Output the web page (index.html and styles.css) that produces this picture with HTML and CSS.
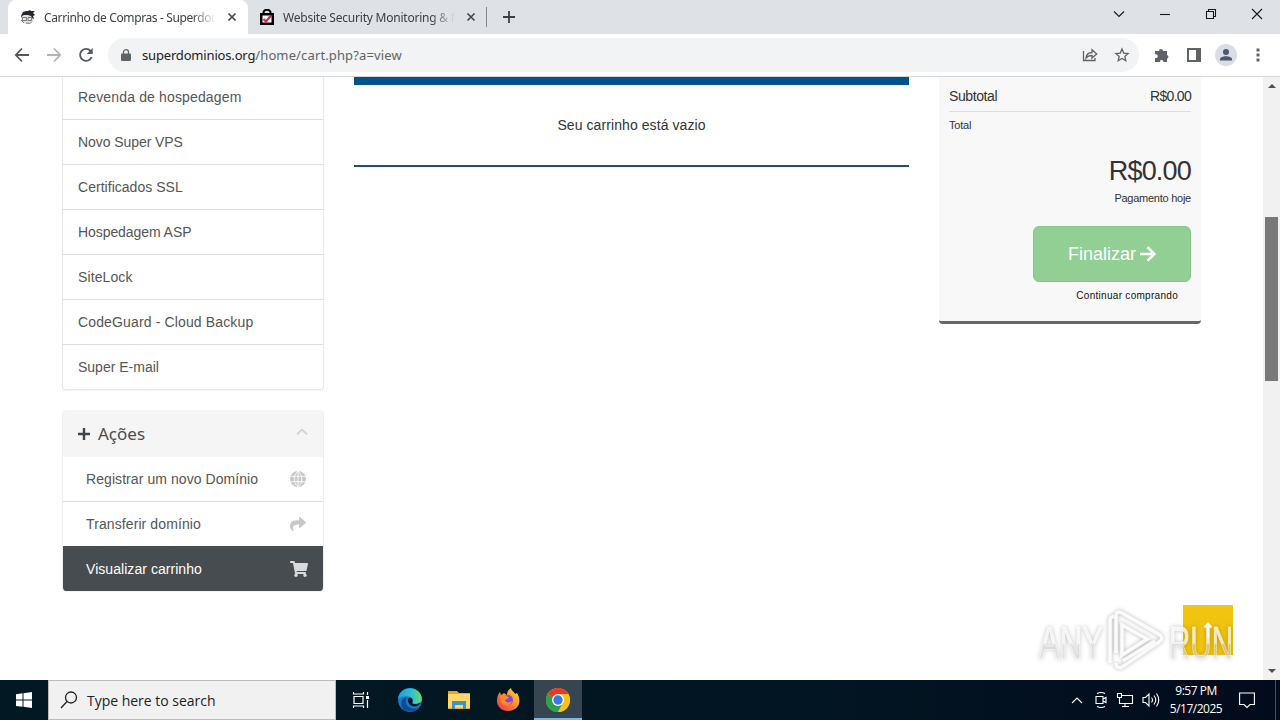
FILE: index.html
```html
<!DOCTYPE html>
<html lang="pt">
<head>
<meta charset="utf-8">
<title>Carrinho de Compras</title>
<link rel="stylesheet" href="styles.css">
</head>
<body>
<header class="tabs">
  <div class="tab active">
    <svg class="favicon" width="16" height="16" viewBox="0 0 16 16"><path d="M1 7l3-3 9 1 1 5-3 4-5 1-4-2z" fill="#e9dcd8"/><path d="M1 7l2-4 3-1h2l2-1 1 1h4l-2 2 2 2-2 1 1 3-2-1-1-2-3-1-4 0-2 1-1 2z" fill="#24262b"/><path d="M2.500 8.500h4v3h-4zM8 8.500h3.500v3H8z" fill="#dbe8ee" stroke="#66727d" stroke-width=".9"/><path d="M1 11l3 3M6 14l4 .5 2-2" stroke="#8b7772" fill="none"/></svg>
    <span class="tab-title t1">Carrinho de Compras - Superdom</span>
    <svg class="close" width="10" height="10" viewBox="0 0 10 10"><path d="M1.500 1.500l7 7M8.500 1.500l-7 7"/></svg>
  </div>
  <div class="tab second">
    <svg class="favicon" width="16" height="16" viewBox="0 0 16 16"><path d="M4.500 6V3.500a3.500 2.700 0 0 1 7 0V6" fill="none" stroke="#000" stroke-width="2"/><path d="M1 4h14v12H1z" fill="#000"/><path d="M3.500 6.500h9v7h-9z" fill="#fff"/><path d="M4.500 10l2.500 2.500 5-6" fill="none" stroke="#dc2445" stroke-width="2.200"/></svg>
    <span class="tab-title t2">Website Security Monitoring &amp; M</span>
    <svg class="close" width="10" height="10" viewBox="0 0 10 10"><path d="M1.500 1.500l7 7M8.500 1.500l-7 7"/></svg>
  </div>
  <span class="divider"></span>
  <svg class="newtab" width="12" height="12" viewBox="0 0 12 12"><path d="M6 0v12M0 6h12"/></svg>
  <div class="winbtns">
    <svg width="12" height="12" viewBox="0 0 12 12"><path d="M1 3.500l5 5 5-5"/></svg>
    <svg width="12" height="12" viewBox="0 0 12 12"><path d="M1 6.500h10"/></svg>
    <svg width="12" height="12" viewBox="0 0 12 12"><path d="M1.500 3.500h7v7h-7zM3.500 3.500v-2h7v7h-2"/></svg>
    <svg width="12" height="12" viewBox="0 0 12 12"><path d="M1 1l10 10M11 1L1 11"/></svg>
  </div>
</header>
<div class="toolbar">
  <svg class="nav" width="16" height="16" viewBox="0 0 16 16"><path d="M15 8H2M8 1.500L1.800 8 8 14.500"/></svg>
  <svg class="nav fwd" width="16" height="16" viewBox="0 0 16 16"><path d="M1 8h13M8 1.500L14.200 8 8 14.500"/></svg>
  <svg class="nav" width="16" height="16" viewBox="0 0 16 16"><path d="M13.700 10a6 6 0 1 1-1.200-6.200L14 5.500"/><path d="M14.700 1v6h-6z" class="solid"/></svg>
  <div class="omnibox">
    <svg width="10" height="12" viewBox="0 0 10 12"><path d="M1 4.500h8q1 0 1 1V11q0 1-1 1H1q-1 0-1-1V5.500q0-1 1-1z" fill="#5f6368"/><path d="M2.500 5V3a2.500 2.300 0 0 1 5 0v2" fill="none" stroke="#5f6368" stroke-width="1.300"/></svg>
    <span class="url"><b>superdominios.org</b>/home/cart.php?a=view</span>
    <svg class="line share" width="16" height="16" viewBox="0 0 16 16"><path d="M1.500 4v9.500H13V11M4 11c.5-4 2.500-5.500 6-5.500V2.800L14.700 7 10 11V8.500c-2.800 0-4.600.8-6 2.500z"/></svg>
    <svg class="line star" width="16" height="16" viewBox="0 0 16 16"><path d="M8 2l1.700 4.100 4.400.4-3.300 2.900 1 4.300L8 11.400l-3.800 2.300 1-4.300L1.900 6.500l4.400-.4z"/></svg>
  </div>
  <svg class="ext" width="16" height="16" viewBox="0 0 16 16"><path d="M1 4h4a2 2 0 1 1 4-.2V4h4v4a1.900 1.900 0 0 1 0 3.700V15H9.500a1.900 1.900 0 0 0-3.800 0H1v-4a2 2 0 1 0 0-3.700z" fill="#5f6368"/></svg>
  <svg class="panel" width="14" height="14" viewBox="0 0 14 14"><path d="M1 1h12v12H1z" fill="none" stroke="#5f6368" stroke-width="2"/><path d="M9 1h4v12H9z" fill="#5f6368"/></svg>
  <svg class="avatar" width="22" height="22" viewBox="0 0 22 22"><circle cx="11" cy="11" r="11" fill="#dadce6"/><circle cx="11" cy="8" r="3" fill="#4d5770"/><path d="M5 16.500v-1.300c0-4 12-4 12 0v1.300z" fill="#4d5770"/></svg>
  <svg class="dots" width="4" height="14" viewBox="0 0 4 14"><path d="M.5.5h3v3h-3zM.5 5.500h3v3h-3zM.5 10.500h3v3h-3z" fill="#5f6368"/></svg>
</div>
<div class="viewport">
  <main class="page">
    <aside class="side">
      <nav class="list">
        <a class="l1">Revenda de hospedagem</a><a class="l2">Novo Super VPS</a><a class="l3">Certificados SSL</a><a class="l4">Hospedagem ASP</a><a class="l5">SiteLock</a><a class="l6">CodeGuard - Cloud Backup</a><a class="l7">Super E-mail</a>
      </nav>
      <nav class="list actions">
        <h3><svg width="12" height="12" viewBox="0 0 12 12"><path d="M6 0v12M0 6h12" stroke="#3e4347" stroke-width="2.400"/></svg><span>Ações</span><svg class="chev" width="12" height="8" viewBox="0 0 12 8"><path d="M1 6.500l5-5 5 5" fill="none" stroke="#d4d4d4" stroke-width="1.800"/></svg></h3>
        <a class="a1"><span>Registrar um novo Domínio</span><svg width="16" height="16" viewBox="0 0 16 16"><circle cx="8" cy="8" r="8" fill="#c7c7c7"/><path d="M0 5.300h16M0 10.700h16M8 0v16M8 0c-5 4-5 12 0 16M8 0c5 4 5 12 0 16" fill="none" stroke="#fff" stroke-width=".9"/></svg></a>
        <a class="a2"><span>Transferir domínio</span><svg width="16" height="16" viewBox="0 0 512 512"><path fill="#c7c7c7" d="M503.700 189.800L327.700 37.900C312.300 24.500 288 35.300 288 56v80C127.400 137.900 0 170.100 0 322.300c0 61.400 39.600 122.300 83.300 154.100 13.700 9.900 33.100-2.500 28.100-18.600C66.100 312.800 132.900 274.300 288 272v88c0 20.700 24.300 31.500 39.700 18.200l176-152c11.100-9.600 11.100-26.800 0-36.400z"/></svg></a>
        <a class="a3"><span>Visualizar carrinho</span><svg width="18" height="16" viewBox="0 0 576 512"><path fill="#d8dadb" d="M528.100 301.300l47.300-208C578.800 78.300 567.400 64 552 64H159.200l-9.200-44.800C147.800 8 137.900 0 126.500 0H24C10.700 0 0 10.700 0 24v16c0 13.300 10.700 24 24 24h69.900l70.200 343.400C147.300 417.100 136 435.200 136 456c0 30.900 25.100 56 56 56s56-25.100 56-56c0-15.700-6.400-29.800-16.800-40h209.600C430.400 426.200 424 440.300 424 456c0 30.900 25.100 56 56 56s56-25.100 56-56c0-22.200-12.900-41.300-31.600-50.400l5.500-24.300c3.400-15-8-29.300-23.400-29.300H218.100l-6.500-32h293.100c11.200 0 20.900-7.800 23.400-18.700z"/></svg></a>
      </nav>
    </aside>
    <section class="cart"><div class="empty"><span>Seu carrinho está vazio</span></div></section>
    <aside class="summary">
      <div class="sub"><span class="s1">Subtotal</span><span class="s2">R$0.00</span></div>
      <div class="total">Total</div>
      <div class="amount">R$0.00</div>
      <div class="today">Pagamento hoje</div>
      <a class="checkout"><span>Finalizar</span><svg width="16" height="16" viewBox="0 0 16 16"><path d="M0 8h14M7.500 1.200L14.300 8l-6.800 6.800" fill="none" stroke="#fff" stroke-width="2.600"/></svg></a>
      <div class="more">Continuar comprando</div>
    </aside>
    <div class="totop"><svg width="10" height="16" viewBox="0 0 10 16"><path d="M5 16V2M1.500 5.500L5 2l3.500 3.500" fill="none" stroke="#fff" stroke-width="2.400"/></svg></div>
    <svg class="mark" width="210" height="70" viewBox="0 0 210 70">
      <defs><linearGradient id="wm" x1="0" y1="0" x2="0" y2="1"><stop offset=".5" stop-color="#fff" stop-opacity=".75"/><stop offset=".54" stop-color="#ddd" stop-opacity=".5"/></linearGradient></defs>
      <g class="glow">
        <text x="8" y="54" textLength="64" lengthAdjust="spacingAndGlyphs">ANY</text>
        <text x="138" y="54" textLength="64" lengthAdjust="spacingAndGlyphs">RUN</text>
        <path d="M79 58V16q0-4 4-5M85 48V11q0-6 6-3l38 22q4 4-1 7L91 62q-6 2-6-4M91 20v30l25-16zM92 56l32-20" fill="none" stroke="#fff" stroke-opacity=".9" stroke-width="3.500"/>
      </g>
    </svg>
  </main>
  <div class="scroll"><i class="up"></i><span class="thumb"></span><i class="down"></i></div>
</div>
<footer class="taskbar">
  <svg class="start" width="16" height="16" viewBox="0 0 16 16"><path d="M0 2.200L6.500 1.300V7.600H0zM7.500 1.200L16 0v7.600H7.500zM0 8.500h6.500v6.300L0 13.900zM7.500 8.500H16V16l-8.500-1.200z" fill="#fff"/></svg>
  <div class="search"><svg width="18" height="18" viewBox="0 0 18 18"><circle cx="11" cy="6.500" r="5.500"/><path d="M7 10.500L1 17"/></svg><span>Type here to search</span></div>
  <div class="apps">
    <div class="app"><svg width="18" height="18" viewBox="0 0 18 18" fill="none" stroke="#fff" stroke-width="1.200"><path d="M2 5.500h9v7H2zM1.500 1v2h10V1M1.500 17v-2h10v2M15.500 1v3M15.500 9v8"/><path d="M14 5h3v3h-3z" fill="#fff" stroke="none"/></svg></div>
    <div class="app"><svg width="26" height="26" viewBox="0 0 24 24"><defs><linearGradient id="e1" x1="0" x2="1"><stop stop-color="#1b9de2"/><stop offset=".6" stop-color="#35c1c9"/><stop offset="1" stop-color="#68dc65"/></linearGradient></defs><circle cx="12" cy="12" r="11" fill="#1679c9"/><path d="M1 11C2-2 22-2 23 11c0 5-7 6-9 3 2-2 0-5-3-5-4-1-8 0-10 2z" fill="url(#e1)"/><path d="M9 10c-3 5 1 10 7 10 3 0 5-1 6-3-6 9-19 6-18-2 0-3 2-5 5-5z" fill="#104b91"/><path d="M10 11q2-2 4 0 1 2 0 4 3 2 8-1-2 4-6 4-6-1-6-7z" fill="#021923"/></svg></div>
    <div class="app"><svg width="22" height="20" viewBox="0 0 22 20"><path d="M0 1h9l2 2h11v16H0z" fill="#e9a820"/><path d="M0 4h22v14H0z" fill="#ffd868"/><path d="M4 11h14v8h-3v-4H7v4H4z" fill="#3c91d0"/></svg></div>
    <div class="app"><svg width="24" height="24" viewBox="0 0 24 24"><defs><linearGradient id="f1" x1="1" y1="0" x2="0" y2="1"><stop stop-color="#ffe34b"/><stop offset=".4" stop-color="#ff9a24"/><stop offset="1" stop-color="#f5255e"/></linearGradient></defs><path d="M1 13c0-4 1-7 3-9l1 3 3-2 3 2c0-3 1-5 4-7 1 4 3 3 4 6l2-1c6 10 0 18-9 18C6 23 1 19 1 13z" fill="url(#f1)"/><circle cx="12" cy="12" r="5" fill="#8146dc"/><path d="M4 8c4-2 6 0 9 1-1 2-3 2-4 3 1 3 4 3 7 1-1 5-8 6-11 1z" fill="#ff872c"/></svg></div>
    <div class="app current"><svg width="24" height="24" viewBox="0 0 24 24"><circle cx="12" cy="12" r="12" fill="#fbc116"/><path d="M12 12L1.600 6A12 12 0 0 1 22.400 6z" fill="#e33b2e"/><path d="M1.600 6A12 12 0 0 0 12 24l5-9-5-3z" fill="#2ba24c"/><path d="M12 6h10.400A12 12 0 0 1 12 24l5.200-9z" fill="#fbc116"/><circle cx="12" cy="12" r="6" fill="#fff"/><circle cx="12" cy="12" r="4.700" fill="#3878e7"/></svg></div>
  </div>
  <div class="tray">
    <svg width="12" height="8" viewBox="0 0 12 8"><path d="M1 7l5-5 5 5"/></svg>
    <svg width="14" height="18" viewBox="0 0 14 18"><path d="M2 5.500h7v7H2zM9 8l3-1.500v5L9 10M3 2.500q4-2 8 0M3 15.500q4 2 8 0"/></svg>
    <svg width="18" height="16" viewBox="0 0 18 16"><path d="M6 3.500h10.500v8H5M9 12v2.500M6 14.500h7M1.500 1.500h4v4h-4zM3.500 5.500v6h3"/></svg>
    <svg width="18" height="16" viewBox="0 0 18 16"><path d="M1 5.500h2.500L7 2v12l-3.500-3.500H1zM9.500 5.500q2 2.500 0 5M12 3.500q3.500 4.500 0 9M14.500 1.500q4.500 6.500 0 13"/></svg>
    <div class="clock"><span>9:57 PM</span><span>5/17/2025</span></div>
    <svg width="16" height="17" viewBox="0 0 16 17"><path d="M.6 1h14.800v11.500H11L8 15.500 5 12.500H.6z"/></svg>
    <i class="desk"></i>
  </div>
</footer>
</body>
</html>
```
FILE: styles.css
```css
* { box-sizing: border-box; }
body { margin: 0; width: 1280px; height: 720px; overflow: hidden; display: flex; flex-direction: column; background: #fff; font-family: "Liberation Sans", Arial, sans-serif; color: #333; }
svg { flex: none; display: block; }
span { white-space: nowrap; }

.tabs { height: 34px; background: #dee1e6; display: flex; align-items: center; font: 12px "Noto Sans", sans-serif; color: #3c4043; }
.tab { height: 34px; display: flex; align-items: center; width: 240px; padding-left: 12px; }
.tab.active { background: #fff; border-radius: 8px 8px 0 0; margin-left: 8px; }
.tab.second { width: 238px; padding-left: 11px; }
.tab-title { width: 172px; margin-left: 8px; overflow: hidden; -webkit-mask-image: linear-gradient(90deg, #000 86%, transparent); mask-image: linear-gradient(90deg, #000 86%, transparent); }
.t1 { letter-spacing: -.38px; }
.t2 { letter-spacing: -.22px; }
.close { margin-left: 11px; fill: none; stroke: #45494d; stroke-width: 1.7; }
.divider { width: 1px; height: 20px; background: #85888d; }
.newtab { margin-left: 16px; stroke: #3c4043; stroke-width: 1.8; }
.winbtns { margin-left: auto; margin-right: 17px; display: flex; gap: 34px; margin-top: -6px; fill: none; stroke: #17181a; stroke-width: 1.1; }

.toolbar { height: 43px; border-bottom: 1px solid #d5d7d9; display: flex; align-items: center; padding-left: 14px; }
.nav { margin-right: 16px; fill: none; stroke: #54585c; stroke-width: 1.8; }
.nav .solid { fill: #54585c; stroke: none; }
.fwd { opacity: .45; }
.omnibox { width: 1031px; height: 34px; margin-left: -2px; border-radius: 17px; background: #f1f3f4; display: flex; align-items: center; padding: 0 9px 0 13px; }
.url { margin-left: 11px; font: 13px "Noto Sans", sans-serif; color: #5f6368; letter-spacing: .13px; }
.url b { font-weight: 400; color: #202124; letter-spacing: -.17px; }
.line { fill: none; stroke: #5f6368; stroke-width: 1.3; }
.share { margin-left: auto; margin-right: 16px; }
.ext { margin-left: 15px; }
.panel { margin-left: 17px; }
.avatar { margin-left: 14px; }
.dots { margin-left: 19px; }

.viewport { height: 603px; display: flex; overflow: hidden; }
.page { position: relative; width: 1263px; padding: 0 62px; display: flex; align-items: flex-start; gap: 30px; }
.side { width: 262px; margin-top: -2px; font-size: 14px; color: #555; }
.list { border: 1px solid #e8e8e8; border-top: 0; border-radius: 4px; overflow: hidden; box-shadow: 0 1px 1px #0000000d; margin-bottom: 20px; }
.list a { height: 45px; display: flex; align-items: center; justify-content: space-between; padding: 0 15px; border-bottom: 1px solid #ddd; }
.list a:last-child { border-bottom: 0; height: 44px; }
.l1 { letter-spacing: .15px; }
.l2 { letter-spacing: -.07px; }
.l3 { letter-spacing: .03px; }
.l4 { letter-spacing: -.07px; }
.l5 { letter-spacing: .1px; }
.l6 { letter-spacing: .14px; }
.a1 { letter-spacing: .07px; }
.a2 { letter-spacing: .1px; }
.a3 { letter-spacing: .05px; }
.actions { border-color: #eee; }
.actions h3 { margin: 0; height: 47px; display: flex; align-items: center; gap: 8px; padding: 0 15px; background: #f5f5f5; font: 17px "Noto Sans", sans-serif; color: #494d50; }
.chev { margin: -4px 0 0 auto; }
.actions a { padding: 0 17px 0 23px; }
.actions a.a2 { height: 44px; border-bottom: 0; }
.actions a.a3 { height: 45px; background: #474c50; color: #fff; padding-right: 15px; }
.actions { border-bottom: 0; }
.cart { width: 555px; border-top: 8px solid #00528a; border-bottom: 2px solid #1c4f78; height: 90px; }
.empty { height: 80px; display: flex; align-items: center; justify-content: center; font-size: 14px; letter-spacing: .08px; }
.summary { width: 262px; height: 247px; background: #f8f8f8; border-bottom: 3px solid #666; border-radius: 0 0 4px 4px; padding: 5px 10px 0; display: flex; flex-direction: column; align-items: stretch; }
.sub { height: 30px; border-bottom: 1px solid #ddd; display: flex; justify-content: space-between; align-items: center; padding-bottom: 1px; font-size: 14px; }
.s1 { letter-spacing: -.4px; }
.s2 { letter-spacing: -.7px; }
.total { font-size: 11px; line-height: 14px; margin-top: 6px; letter-spacing: -.2px; }
.amount { font-size: 27px; line-height: 32px; text-align: right; margin-top: 23px; letter-spacing: -.8px; }
.today { font-size: 11px; line-height: 14px; text-align: right; margin-top: 4px; letter-spacing: -.25px; }
.checkout { align-self: flex-end; width: 158px; height: 56px; margin-top: 21px; border: 1px solid #87c68a; border-radius: 6px; background: #92cf94; color: #fff; font-size: 18px; display: flex; align-items: center; justify-content: center; gap: 4px; }
.more { font-size: 10px; line-height: 14px; text-align: right; margin-top: 7px; padding-right: 13px; letter-spacing: .29px; color: #111; }
.totop { position: absolute; left: 1183px; top: 528px; width: 50px; height: 50px; background: #f1c40f; display: flex; align-items: center; justify-content: center; }
.mark { position: absolute; left: 1031px; top: 528px; }
.mark text { font: 46px "Liberation Sans", sans-serif; fill: url(#wm); stroke: #fff; stroke-opacity: .5; stroke-width: 1; }
.glow { filter: drop-shadow(0 0 2px #00000052); }
.scroll { width: 17px; background: #f1f1f1; display: flex; flex-direction: column; align-items: center; }
.scroll i { border: 4px solid transparent; width: 8px; height: 4px; }
.scroll .up { border-top: 0; border-bottom-color: #505050; margin-top: 7px; }
.thumb { width: 13px; height: 164px; margin-top: 129px; background: #797979; }
.scroll .down { border-bottom: 0; border-top-color: #505050; margin-top: auto; margin-bottom: 7px; }

.taskbar { height: 40px; background: linear-gradient(90deg, #021923, #021522 65%, #020b1c); display: flex; align-items: center; color: #fff; }
.start { margin: 0 16px; }
.search { width: 288px; height: 40px; background: #f1f1f1; border: 1px solid #bbb; display: flex; align-items: center; padding-left: 11px; gap: 9px; color: #222; font: 14px "Open Sans", sans-serif; }
.search svg { fill: none; stroke: #222; stroke-width: 1.3; }
.search span { letter-spacing: -.02px; }
.apps { display: flex; }
.app { width: 49px; height: 40px; display: flex; align-items: center; justify-content: center; }
.app.current { width: 48px; margin-left: 2px; background: #36454f; border-bottom: 2px solid #76b9ed; padding-top: 2px; }
.tray { margin-left: auto; display: flex; align-items: center; fill: none; stroke: #fff; stroke-width: 1.1; }
.tray > svg { margin-right: 8px; }
.tray > svg:first-child { margin-right: 11px; }
.tray > svg:nth-child(4) { margin-right: 9px; }
.tray > svg:last-of-type { margin-right: 20px; }
.clock { width: 54px; display: flex; flex-direction: column; align-items: center; font: 12px/18px "Open Sans", sans-serif; letter-spacing: -.5px; margin-right: 16px; }
.desk { width: 1px; height: 40px; margin-right: 4px; background: #465160; }
```
